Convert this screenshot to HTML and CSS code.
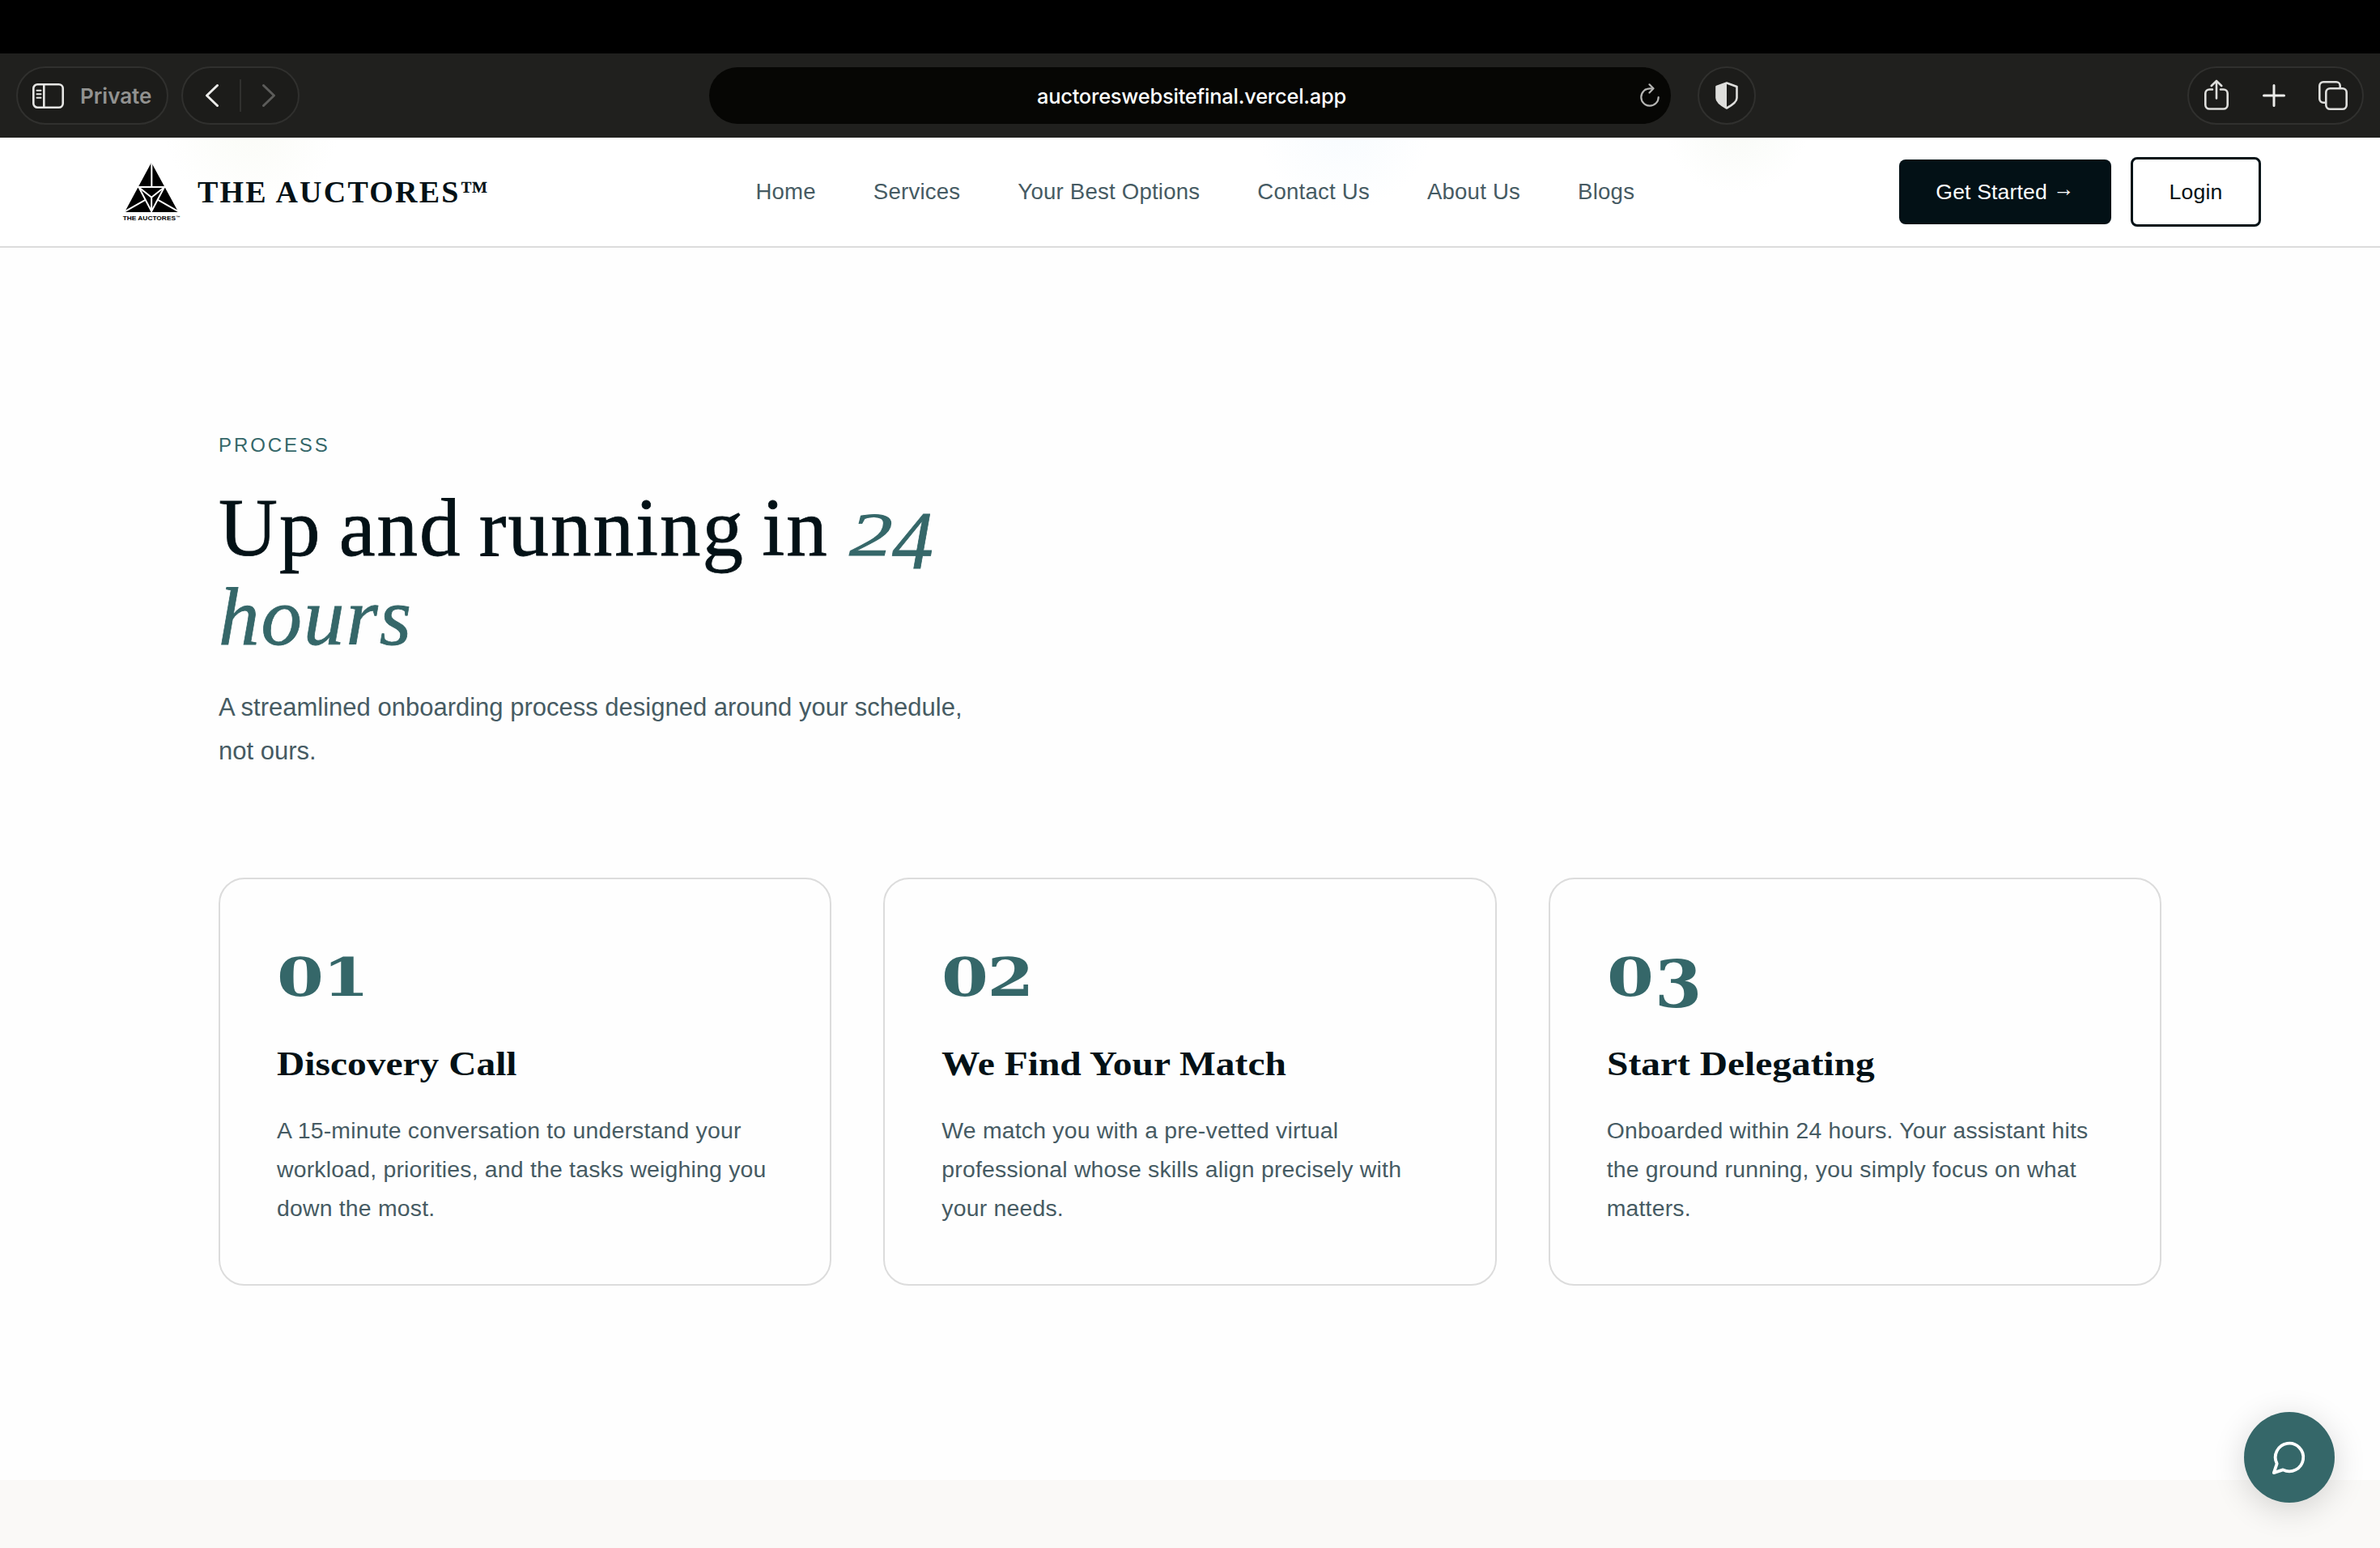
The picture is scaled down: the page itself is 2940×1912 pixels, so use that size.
FILE: index.html
```html
<!DOCTYPE html>
<html lang="en">
<head>
  <meta charset="UTF-8">
  <meta name="viewport" content="width=device-width, initial-scale=1.0">
  <title>The Auctores</title>
  <link rel="stylesheet" href="styles.css">
</head>
<body>
  <div class="menubar"></div>

  <div class="toolbar">
    <div class="pill private">
      <svg width="39" height="31" viewBox="0 0 39 31" fill="none" stroke="#e6e6e4" stroke-width="2.6">
        <rect x="1.3" y="1.3" width="36.4" height="28.4" rx="5"/>
        <path d="M14.3 1.3v28.4"/>
        <path d="M5.5 8.8h5M5.5 13.3h5M5.5 17.8h5" stroke-width="2" stroke-linecap="round"/>
      </svg>
      <span>Private</span>
    </div>
    <div class="pill history">
      <svg width="18" height="30" viewBox="0 0 18 30" fill="none" stroke="#ececea" stroke-width="3" stroke-linecap="round" stroke-linejoin="round"><path d="M15.5 2.5L2.5 15l13 12.5"/></svg>
      <i></i>
      <svg width="18" height="30" viewBox="0 0 18 30" fill="none" stroke="#5c5c5a" stroke-width="3" stroke-linecap="round" stroke-linejoin="round"><path d="M2.5 2.5L15.5 15l-13 12.5"/></svg>
    </div>
    <div class="address">
      <span>auctoreswebsitefinal.vercel.app</span>
      <svg width="26" height="30" viewBox="0 0 26 30" fill="none" stroke="#b4b4b2" stroke-width="2.2" stroke-linecap="round" stroke-linejoin="round">
        <path d="M16.5 6.3H13A10.7 10.7 0 1 0 23.7 17"/>
        <path d="M12.5 1.3l5 5-5 5.2"/>
      </svg>
    </div>
    <div class="pill shield">
      <svg width="28" height="34" viewBox="0 0 28 34">
        <path d="M14 1.5L26.5 6v14c0 5-6 9-12.5 12.5C7.5 29 1.5 25 1.5 20V6z" fill="none" stroke="#dededc" stroke-width="2.6" stroke-linejoin="round"/>
        <path d="M14 1.5V32.5C7.5 29 1.5 25 1.5 20V6z" fill="#dededc"/>
      </svg>
    </div>
    <div class="pill actions">
      <svg width="30" height="38" viewBox="0 0 30 38" fill="none" stroke="#dededc" stroke-width="2.6" stroke-linecap="round" stroke-linejoin="round">
        <path d="M10 12.5H6.3a5 5 0 0 0-5 5V31.5a5 5 0 0 0 5 5H23.7a5 5 0 0 0 5-5V17.5a5 5 0 0 0-5-5H20"/>
        <path d="M15 23.5V2M8.8 8L15 1.8 21.2 8"/>
      </svg>
      <svg width="28" height="28" viewBox="0 0 28 28" fill="none" stroke="#ececea" stroke-width="3" stroke-linecap="round"><path d="M14 1.5v25M1.5 14h25"/></svg>
      <svg width="36" height="36" viewBox="0 0 36 36" fill="none" stroke="#dededc" stroke-width="2.6">
        <rect x="9.3" y="9.3" width="25.4" height="25.4" rx="5"/>
        <path d="M9 26.7H6a4.7 4.7 0 0 1-4.7-4.7V6A4.7 4.7 0 0 1 6 1.3H22A4.7 4.7 0 0 1 26.7 6V9"/>
      </svg>
    </div>
  </div>

  <header class="site-header">
    <div class="brand">
      <svg class="logo" width="74" height="75" viewBox="60 60 222 225">
        <path d="M171 62L271 246H72z" fill="#000"/>
        <g fill="none" stroke="#fff" stroke-width="6">
          <path d="M172 56V152"/>
          <path d="M118 153H224"/>
          <path d="M124 153L171.5 243 219 153"/>
          <path d="M128 157L171.5 191 215 157M171.5 191V240"/>
          <path d="M150 200L72 244M194 200L272 244"/>
        </g>
        <text x="65" y="276" textLength="212" lengthAdjust="spacingAndGlyphs">THE AUCTORES<tspan font-size="14" dy="-6">™</tspan></text>
      </svg>
      <span class="brand-name">THE AUCTORES<sup>™</sup></span>
    </div>
    <nav class="nav">
      <a>Home</a>
      <a>Services</a>
      <a>Your Best Options</a>
      <a>Contact Us</a>
      <a>About Us</a>
      <a>Blogs</a>
    </nav>
    <div class="header-actions">
      <a class="btn btn-dark">Get Started <span class="arrow">→</span></a>
      <a class="btn btn-outline">Login</a>
    </div>
  </header>

  <section class="process">
    <p class="eyebrow">PROCESS</p>
    <h2>Up and running in <em><span class="two">2</span><span class="four">4</span> hours</em></h2>
    <p class="lead">A streamlined onboarding process designed around your schedule, not ours.</p>

    <div class="steps">
      <div class="step">
        <div class="num">01</div>
        <h3>Discovery Call</h3>
        <p>A 15-minute conversation to understand your workload, priorities, and the tasks weighing you down the most.</p>
      </div>
      <div class="step">
        <div class="num">02</div>
        <h3>We Find Your Match</h3>
        <p>We match you with a pre-vetted virtual professional whose skills align precisely with your needs.</p>
      </div>
      <div class="step">
        <div class="num">0<span class="low">3</span></div>
        <h3>Start Delegating</h3>
        <p>Onboarded within 24 hours. Your assistant hits the ground running, you simply focus on what matters.</p>
      </div>
    </div>
  </section>

  <div class="chat">
    <svg width="46" height="46" viewBox="0 0 24 24" fill="none" stroke="#fff" stroke-width="2" stroke-linecap="round" stroke-linejoin="round"><path d="M7.9 20A9 9 0 1 0 4 16.1L2 22Z"/></svg>
  </div>
</body>
</html>
```
FILE: styles.css
```css
* {
  box-sizing: border-box;
  margin: 0;
  padding: 0;
}

body {
  height: 1912px;
  overflow: hidden;
  background: #faf9f7;
  color: #031116;
  font-family: "Liberation Sans", Arial, sans-serif;
}

svg {
  display: block;
  flex-shrink: 0;
}

/* browser chrome */

.menubar {
  height: 66px;
  background: #000;
}

.toolbar {
  display: flex;
  align-items: center;
  height: 104px;
  padding: 0 20px;
  background: #20201e;
  font-family: Inter, sans-serif;
}

.pill {
  display: flex;
  align-items: center;
  height: 72px;
  border: 2px solid #30302e;
  border-radius: 36px;
  background: #1c1c1a;
}

.private {
  width: 188px;
  padding-left: 18px;
  gap: 20px;
  color: #929290;
  font-size: 26px;
  font-weight: 600;
}

.history {
  width: 146px;
  margin-left: 16px;
  justify-content: space-between;
  padding: 0 27px;
}

.history i {
  width: 2px;
  height: 40px;
  background: #30302e;
}

.address {
  display: flex;
  align-items: center;
  width: 1188px;
  height: 70px;
  margin-left: 506px;
  padding: 0 13px 0 43px;
  border-radius: 35px;
  background: #060604;
  color: #fff;
  font-size: 25.4px;
  font-weight: 500;
  letter-spacing: -0.2px;
}

.address span {
  flex: 1;
  text-align: center;
}

.shield {
  width: 72px;
  margin-left: 33px;
  justify-content: center;
}

.actions {
  width: 218px;
  margin-left: auto;
  padding: 0 18px 0 19px;
  justify-content: space-between;
}

.actions svg:first-child {
  margin-top: -3px;
}

/* site header */

.site-header {
  display: flex;
  align-items: center;
  justify-content: space-between;
  height: 136px;
  padding: 0 147px 0 150px;
  border-bottom: 2px solid #dcdcdc;
  background:
    radial-gradient(circle at 310px -20px, #fafbf6, transparent 110px),
    radial-gradient(circle at 1660px -20px, #f7fbfe, transparent 110px),
    radial-gradient(circle at 2145px -20px, #f8faf6, transparent 90px),
    #fff;
}

.brand {
  display: flex;
  align-items: center;
  gap: 20px;
}

.logo text {
  font-size: 22px;
  font-weight: bold;
}

.brand-name {
  font-family: "Liberation Serif", Georgia, serif;
  font-size: 38px;
  font-weight: bold;
  line-height: 44px;
  letter-spacing: 2.2px;
  white-space: nowrap;
}

.brand-name sup {
  font-size: 34px;
  line-height: 0;
  vertical-align: 3px;
  letter-spacing: 0;
}

.nav {
  display: flex;
  gap: 71px;
  margin-left: 4px;
  color: #465b63;
  font-size: 27.6px;
  letter-spacing: 0.21px;
}

.header-actions {
  display: flex;
  align-items: center;
  gap: 24px;
}

.btn {
  display: flex;
  align-items: center;
  justify-content: center;
  border-radius: 8px;
  font-size: 26.6px;
  letter-spacing: 0.15px;
  white-space: pre;
}

.btn-dark {
  width: 262px;
  height: 80px;
  background: #031116;
  color: #fff;
}

.btn-outline {
  width: 161px;
  height: 86px;
  border: 3px solid #031116;
}

.arrow {
  margin-top: -7px;
  font-size: 26px;
  font-weight: bold;
}

/* process section */

.process {
  height: 1522px;
  padding: 226px 270px 0;
  background: #fefefe;
}

.eyebrow {
  color: #356769;
  font-size: 24px;
  line-height: 36px;
  letter-spacing: 2.9px;
}

h2 {
  width: 960px;
  height: 220px;
  margin-top: 29px;
  font-family: "Liberation Serif", Georgia, serif;
  font-size: 101px;
  font-weight: normal;
  line-height: 110px;
  letter-spacing: 2px;
  word-spacing: -6px;
  -webkit-text-stroke: 0.8px currentColor;
}

h2 em {
  color: #356769;
}

/* old-style figures */
.two,
.four,
.low {
  display: inline-block;
}

.two {
  width: 53px;
  margin-left: 4px;
  font-size: 76px;
  line-height: 80px;
  transform: scaleX(1.42);
  transform-origin: left;
}

.four {
  height: 70px;
  font-size: 102px;
  line-height: 70px;
  vertical-align: -16px;
}

.lead {
  width: 960px;
  margin-top: 30px;
  color: #465b63;
  font-size: 31px;
  line-height: 54px;
}

.steps {
  display: grid;
  grid-template-columns: repeat(3, 1fr);
  gap: 64px;
  margin-top: 129px;
}

.step {
  height: 504px;
  padding: 70px;
  border: 2px solid #dcdcdc;
  border-radius: 32px;
}

.num {
  height: 102px;
  color: #356769;
  font-family: "DejaVu Serif", Georgia, serif;
  font-size: 65px;
  font-weight: bold;
  line-height: 102px;
  letter-spacing: -1px;
  transform: scaleX(1.28);
  transform-origin: left;
}

.low {
  width: 46px;
  margin-left: 2px;
  font-size: 80px;
  line-height: 70px;
  vertical-align: -14px;
  transform: scaleX(0.82);
  transform-origin: left;
}

.step h3 {
  margin-top: 30px;
  font-family: "Liberation Serif", Georgia, serif;
  font-size: 42px;
  line-height: 52px;
  white-space: nowrap;
  transform: scaleX(1.13);
  transform-origin: left;
}

.step p {
  margin-top: 32px;
  color: #465b63;
  font-size: 28.4px;
  line-height: 48.2px;
  letter-spacing: 0.2px;
}

/* floating chat button */

.chat {
  position: absolute;
  left: 2772px;
  top: 1744px;
  display: flex;
  align-items: center;
  justify-content: center;
  width: 112px;
  height: 112px;
  border-radius: 50%;
  background: #356769;
  box-shadow: 0 8px 40px rgba(0, 0, 0, 0.16);
}
```
